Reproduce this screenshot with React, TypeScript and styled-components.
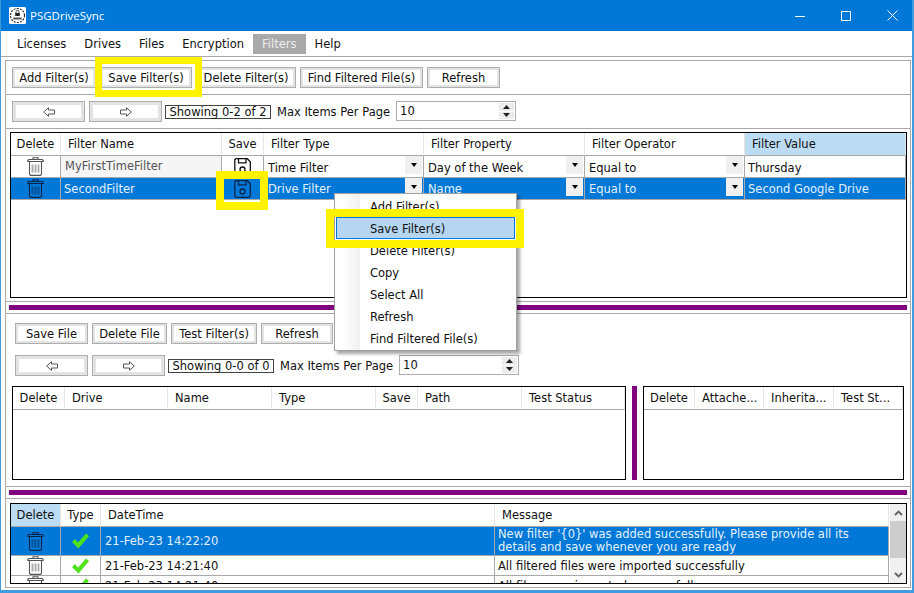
import type { ReactNode } from "react";
import styled, { createGlobalStyle } from "styled-components";

const Global = createGlobalStyle`
  html, body { margin: 0; padding: 0; background: #fff; overflow: hidden; }
  * { box-sizing: border-box; }
`;

const Window = styled.div`
  position: relative;
  width: 914px;
  height: 593px;
  display: flex;
  flex-direction: column;
  background: #fff;
  border-style: solid;
  border-width: 0 2px 3px 1px;
  border-color: #3f9ae0;
  font-family: "DejaVu Sans", Verdana, sans-serif;
  font-size: 11.5px;
  color: #111;
  overflow: hidden;
`;

const TitleBar = styled.div`
  height: 31px;
  flex: none;
  margin: 0 -3px 0 -1px;
  background: #0078d7;
  color: #fff;
  display: flex;
  align-items: center;
  padding-left: 9px;
  font-family: "Open Sans", "Noto Sans", sans-serif;
  font-size: 11.5px;
`;

const AppName = styled.span`
  margin-left: 4px;
  flex: 1;
`;

const WinButton = styled.div`
  width: 46px;
  height: 31px;
  display: grid;
  place-items: center;
`;

const MenuBar = styled.div`
  height: 26px;
  flex: none;
  display: flex;
  align-items: center;
  padding: 1px 0 0 7px;
  border-bottom: 1px solid #a9a9a9;
`;

const MenuItem = styled.div<{ $active?: boolean }>`
  height: 20px;
  line-height: 20px;
  padding: 0 9px;
  background: ${({ $active }) => ($active ? "#a9a9a9" : "transparent")};
  color: ${({ $active }) => ($active ? "#ececec" : "#111")};
`;

const Panel = styled.div`
  flex: 1;
  margin: 3px 1px 2px 4px;
  border: 1px solid #a9a9a9;
  display: flex;
  flex-direction: column;
  min-height: 0;
`;

const Toolbar = styled.div`
  height: 34px;
  flex: none;
  display: flex;
  align-items: center;
  gap: 4px;
  padding-left: 6px;
  border-bottom: 1px solid #a9a9a9;
`;

const Pager = styled(Toolbar)``;

const BareRow = styled.div`
  display: flex;
  align-items: center;
  gap: 4px;
`;

const Button = styled.div<{ $w: number; $thick?: boolean }>`
  width: ${({ $w }) => $w}px;
  height: 21px;
  flex: none;
  border: 1px solid #adadad;
  box-shadow: inset 0 0 0 ${({ $thick }) => ($thick ? 3 : 2)}px #e3e3e3;
  background: #fff;
  display: grid;
  place-items: center;
  white-space: nowrap;
`;

const Showing = styled.div`
  width: 106px;
  height: 14px;
  margin: 1px 0 0 -1px;
  border: 1px solid #444;
  line-height: 12px;
  text-align: center;
  white-space: nowrap;
`;

const MaxLabel = styled.div`
  margin: 1px 2px 0;
  white-space: nowrap;
`;

const Spin = styled.div`
  width: 120px;
  height: 20px;
  margin-top: -1px;
  border: 1px solid #adadad;
  display: flex;
  justify-content: space-between;
  padding: 1px 1px 1px 3px;
  line-height: 16px;
`;

const SpinArrows = styled.div`
  width: 15px;
  display: flex;
  flex-direction: column;
  gap: 1px;
`;

const SpinArrow = styled.div`
  flex: 1;
  background: #ececec;
  display: grid;
  place-items: center;
  font-size: 0;
`;

const GridArea = styled.div`
  height: 173px;
  flex: none;
  padding: 3px 3px 3px 4px;
  border-bottom: 1px solid #a9a9a9;
`;

const Splitter = styled.div`
  height: 12px;
  flex: none;
  padding: 3px 3px 2px 3px;
  border-bottom: 1px solid #a9a9a9;
`;

const SplitBar = styled.div`
  height: 5px;
  background: #800080;
`;

const Middle = styled.div`
  height: 173px;
  flex: none;
  display: flex;
  flex-direction: column;
  border-bottom: 1px solid #a9a9a9;
`;

const MiddleButtons = styled(BareRow)`
  padding: 9px 0 0 9px;
`;

const MiddlePager = styled(BareRow)`
  padding: 11px 0 0 9px;
`;

const MiddleGrids = styled.div`
  display: flex;
  height: 94px;
  margin-top: 10px;
  padding-left: 6px;
`;

const VSplit = styled.div`
  width: 5px;
  margin: 0 6px;
  background: #800080;
`;

const LogArea = styled.div`
  flex: 1;
  padding: 4px 3px 3px 4px;
  min-height: 0;
`;

const Grid = styled.div<{ $w?: number }>`
  width: ${({ $w }) => ($w ? `${$w}px` : "auto")};
  height: 100%;
  border: 1px solid #000;
  background: #fff;
  overflow: hidden;
  display: flex;
`;

const GridBody = styled.div`
  flex: 1;
  min-width: 0;
  overflow: hidden;
`;

const Row = styled.div<{ $cols: string; $h: number; $selected?: boolean }>`
  display: grid;
  grid-template-columns: ${({ $cols }) => $cols};
  height: ${({ $h }) => $h}px;
  background: ${({ $selected }) => ($selected ? "#0078d7" : "#fff")};
  color: ${({ $selected }) => ($selected ? "#e4f1fb" : "#111")};
`;

const HeadCell = styled.div<{ $hot?: boolean; $center?: boolean }>`
  display: flex;
  align-items: center;
  justify-content: ${({ $center }) => ($center ? "center" : "flex-start")};
  padding-left: ${({ $center }) => ($center ? 0 : 7)}px;
  padding-bottom: 1px;
  white-space: nowrap;
  overflow: hidden;
  background: ${({ $hot }) => ($hot ? "#bbdcf3" : "#fff")};
  border-right: 1px solid #e6e6e6;
  border-bottom: 1px solid #a9a9a9;
`;

const Cell = styled.div<{ $center?: boolean; $muted?: boolean; $top?: number }>`
  position: relative;
  display: flex;
  align-items: center;
  justify-content: ${({ $center }) => ($center ? "center" : "flex-start")};
  padding-left: ${({ $center }) => ($center ? 0 : 4)}px;
  padding-top: ${({ $top }) => $top ?? 0}px;
  white-space: nowrap;
  overflow: hidden;
  line-height: 13px;
  background: ${({ $muted }) => ($muted ? "#f5f5f5" : "transparent")};
  color: ${({ $muted }) => ($muted ? "#555" : "inherit")};
  border-right: 1px solid #a9a9a9;
  border-bottom: 1px solid #a9a9a9;
`;

const NameText = styled.span<{ $selected?: boolean }>`
  margin-left: ${({ $selected }) => ($selected ? -1 : 0)}px;
`;

const TightText = styled.span`
  margin-left: -1px;
`;

const ComboButton = styled.div`
  position: absolute;
  top: 0;
  right: 1px;
  width: 17px;
  height: 18px;
  background: #f0f0f0;
  display: grid;
  place-items: center;
`;

const ComboArrow = styled.div`
  width: 0;
  height: 0;
  border: 3px solid transparent;
  border-top: 4px solid #000;
  border-bottom: 0;
`;

const Scrollbar = styled.div`
  width: 16px;
  flex: none;
  margin-left: 1px;
  background: #f0f0f0;
  display: flex;
  flex-direction: column;
  align-items: center;
  justify-content: space-between;
  padding: 6px 0 5px;
  position: relative;
`;

const ScrollThumb = styled.div`
  position: absolute;
  top: 17px;
  left: 0;
  right: 0;
  height: 37px;
  background: #cdcdcd;
`;

const ContextMenu = styled.div`
  position: absolute;
  left: 333px;
  top: 193px;
  width: 183px;
  height: 158px;
  padding: 1px;
  border: 1px solid #a0a0a0;
  box-shadow: 3px 3px 3px rgba(0, 0, 0, 0.35);
  background: linear-gradient(to right, #fff 8px, #f0f0f0 25px, #fff 25px);
`;

const ContextItem = styled.div<{ $selected?: boolean }>`
  height: 22px;
  line-height: 22px;
  padding-left: 33px;
  border: 1px solid ${({ $selected }) => ($selected ? "#0078d7" : "transparent")};
  background: ${({ $selected }) => ($selected ? "#b5d5f1" : "transparent")};
`;

const Mark = styled.div`
  position: absolute;
  border: 7px solid #fff200;
  pointer-events: none;
`;

const ButtonMark = styled(Mark)`
  left: 94px;
  top: 57px;
  width: 107px;
  height: 40px;
`;

const IconMark = styled(Mark)`
  left: 215px;
  top: 171px;
  width: 52px;
  height: 39px;
  border-width: 8px;
`;

const MenuMark = styled(Mark)`
  left: 325px;
  top: 209px;
  width: 198px;
  height: 39px;
  border-width: 8px;
`;

type Col = { title: string; width: number; center?: boolean; hot?: boolean };

const cols = (list: Col[]) => list.map((c) => `${c.width}px`).join(" ");

const filterCols: Col[] = [
  { title: "Delete", width: 50, center: true },
  { title: "Filter Name", width: 161 },
  { title: "Save", width: 42, center: true },
  { title: "Filter Type", width: 160 },
  { title: "Filter Property", width: 161 },
  { title: "Filter Operator", width: 160 },
  { title: "Filter Value", width: 161, hot: true },
];

const fileCols: Col[] = [
  { title: "Delete", width: 52, center: true },
  { title: "Drive", width: 103 },
  { title: "Name", width: 104 },
  { title: "Type", width: 104 },
  { title: "Save", width: 42, center: true },
  { title: "Path", width: 104 },
  { title: "Test Status", width: 103 },
];

const attachCols: Col[] = [
  { title: "Delete", width: 51, center: true },
  { title: "Attache...", width: 69 },
  { title: "Inherita...", width: 70 },
  { title: "Test St...", width: 69 },
];

const logCols: Col[] = [
  { title: "Delete", width: 50, center: true, hot: true },
  { title: "Type", width: 40, center: true },
  { title: "DateTime", width: 394 },
  { title: "Message", width: 394 },
];

const Trash = ({ color }: { color: string }) => (
  <svg width="17" height="19" viewBox="0 0 17 19" fill="none" stroke={color} strokeWidth="1.1">
    <path d="M6 2.500V.8h5v1.700" />
    <path d="M.8 3.500l1-1h13.400l1 1v1H.8z" />
    <path d="M2.500 4.500v12.700l1 1.200h10l1-1.200V4.500" />
    <path d="M5.500 7.500v8M8.500 7.500v8M11.500 7.500v8" strokeWidth="1.800" opacity="0.5" />
  </svg>
);

const Floppy = ({ color }: { color: string }) => (
  <svg width="17" height="18" viewBox="0 0 17 18" fill="none" stroke={color} strokeWidth="1.300">
    <path d="M1.800.7h11.500l3 3v12.200l-1 1.400H1.800l-1-1.400V1.700z" />
    <path d="M4.500.7v4.200h7.500V.7" />
    <circle cx="8.500" cy="11.500" r="2.500" />
  </svg>
);

const Check = () => (
  <svg width="17" height="16" viewBox="0 0 17 16">
    <path d="M0 9l3-3 3 3.500L14 .5l3 2.500L6.500 15.500z" fill="#4fe31c" />
  </svg>
);

const Arrow = ({ right }: { right?: boolean }) => (
  <svg width="12" height="10" viewBox="0 0 12 10" fill="#fff" stroke="#555">
    <path d={right ? "M.5 3h6V.7L11.300 5 6.500 9.300V7h-6z" : "M11.500 3h-6V.7L.700 5l4.800 4.300V7h6z"} />
  </svg>
);

const Tri = ({ up, color = "#444" }: { up?: boolean; color?: string }) => (
  <svg width="7" height="4" viewBox="0 0 7 4">
    <path d={up ? "M0 4l3.500-4L7 4z" : "M0 0l3.500 4L7 0z"} fill={color} />
  </svg>
);

const Chevron = ({ up }: { up?: boolean }) => (
  <svg width="9" height="6" viewBox="0 0 9 6" fill="none" stroke="#606060" strokeWidth="1.800">
    <path d={up ? "M1 5l3.500-3.500L8 5" : "M1 1l3.500 3.500L8 1"} />
  </svg>
);

const Logo = () => (
  <svg width="17" height="17" viewBox="0 0 17 17">
    <rect width="17" height="17" rx="1.500" fill="#fff" />
    <circle cx="8.500" cy="8.500" r="7" fill="none" stroke="#222" strokeWidth="1.100" strokeDasharray="2 1.200" />
    <path d="M7 6V4.800a1.500 1.500 0 013 0V6" fill="none" stroke="#222" strokeWidth="0.800" />
    <rect x="6.200" y="6" width="4.600" height="3" fill="#222" />
    <path d="M4.300 10.500h8.400v2H4.300z" fill="#555" />
  </svg>
);

const Head = ({ columns }: { columns: Col[] }) => (
  <Row $cols={cols(columns)} $h={23}>
    {columns.map((c) => (
      <HeadCell key={c.title} $hot={c.hot} $center={c.center}>
        {c.title}
      </HeadCell>
    ))}
  </Row>
);

const Combo = ({ text, top }: { text: string; top: number }) => (
  <Cell $top={top}>
    {text}
    <ComboButton>
      <ComboArrow />
    </ComboButton>
  </Cell>
);

const FilterRow = ({
  name,
  type,
  prop,
  value,
  selected,
}: {
  name: string;
  type: string;
  prop: string;
  value: string;
  selected?: boolean;
}) => {
  const top = selected ? 2 : 4;
  return (
    <Row $cols={cols(filterCols)} $h={22} $selected={selected}>
      <Cell $center>
        <Trash color={selected ? "#06244a" : "#555"} />
      </Cell>
      <Cell $muted={!selected} $top={selected ? 2 : 0}>
        <NameText $selected={selected}>{name}</NameText>
      </Cell>
      <Cell $center>
        <Floppy color={selected ? "#06244a" : "#111"} />
      </Cell>
      <Combo text={type} top={top} />
      <Combo text={prop} top={top} />
      <Combo text="Equal to" top={top} />
      <Cell $top={top}>
        <TightText>{value}</TightText>
      </Cell>
    </Row>
  );
};

const LogRow = ({
  time,
  message,
  h,
  top,
  selected,
}: {
  time: string;
  message: ReactNode;
  h: number;
  top?: number;
  selected?: boolean;
}) => (
  <Row $cols={cols(logCols)} $h={h} $selected={selected}>
    <Cell $center>
      <Trash color={selected ? "#06244a" : "#555"} />
    </Cell>
    <Cell $center>
      <Check />
    </Cell>
    <Cell $top={top}>{time}</Cell>
    <Cell $top={top}>
      <TightText>{message}</TightText>
    </Cell>
  </Row>
);

const PagerContent = ({ showing }: { showing: string }) => (
  <>
    <Button $w={73} $thick>
      <Arrow />
    </Button>
    <Button $w={73} $thick>
      <Arrow right />
    </Button>
    <Showing>{showing}</Showing>
    <MaxLabel>Max Items Per Page</MaxLabel>
    <Spin>
      10
      <SpinArrows>
        <SpinArrow>
          <Tri up color="#222" />
        </SpinArrow>
        <SpinArrow>
          <Tri color="#222" />
        </SpinArrow>
      </SpinArrows>
    </Spin>
  </>
);

export default function App() {
  return (
    <Window>
      <Global />
      <TitleBar>
        <Logo />
        <AppName>PSGDriveSync</AppName>
        <WinButton>
          <svg width="10" height="10" viewBox="0 0 10 10" stroke="#fff">
            <path d="M0 5.500h10" />
          </svg>
        </WinButton>
        <WinButton>
          <svg width="10" height="10" viewBox="0 0 10 10" stroke="#fff" fill="none">
            <path d="M.5.500h9v9h-9z" />
          </svg>
        </WinButton>
        <WinButton>
          <svg width="11" height="11" viewBox="0 0 11 11" stroke="#fff">
            <path d="M.5.500l10 10M10.500.500l-10 10" />
          </svg>
        </WinButton>
      </TitleBar>
      <MenuBar>
        <MenuItem>Licenses</MenuItem>
        <MenuItem>Drives</MenuItem>
        <MenuItem>Files</MenuItem>
        <MenuItem>Encryption</MenuItem>
        <MenuItem $active>Filters</MenuItem>
        <MenuItem>Help</MenuItem>
      </MenuBar>
      <Panel>
        <Toolbar>
          <Button $w={84}>Add Filter(s)</Button>
          <Button $w={92}>Save Filter(s)</Button>
          <Button $w={100}>Delete Filter(s)</Button>
          <Button $w={123}>Find Filtered File(s)</Button>
          <Button $w={73}>Refresh</Button>
        </Toolbar>
        <Pager>
          <PagerContent showing="Showing 0-2 of 2" />
        </Pager>
        <GridArea>
          <Grid>
            <GridBody>
              <Head columns={filterCols} />
              <FilterRow name="MyFirstTimeFilter" type="Time Filter" prop="Day of the Week" value="Thursday" />
              <FilterRow name="SecondFilter" type="Drive Filter" prop="Name" value="Second Google Drive" selected />
            </GridBody>
          </Grid>
        </GridArea>
        <Splitter>
          <SplitBar />
        </Splitter>
        <Middle>
          <MiddleButtons>
            <Button $w={73}>Save File</Button>
            <Button $w={75}>Delete File</Button>
            <Button $w={86}>Test Filter(s)</Button>
            <Button $w={72}>Refresh</Button>
          </MiddleButtons>
          <MiddlePager>
            <PagerContent showing="Showing 0-0 of 0" />
          </MiddlePager>
          <MiddleGrids>
            <Grid $w={614}>
              <GridBody>
                <Head columns={fileCols} />
              </GridBody>
            </Grid>
            <VSplit />
            <Grid $w={261}>
              <GridBody>
                <Head columns={attachCols} />
              </GridBody>
            </Grid>
          </MiddleGrids>
        </Middle>
        <Splitter>
          <SplitBar />
        </Splitter>
        <LogArea>
          <Grid>
            <GridBody>
              <Head columns={logCols} />
              <LogRow
                selected
                h={29}
                time="21-Feb-23 14:22:20"
                message={
                  <>
                    New filter '{"{0}"}' was added successfully. Please provide all its
                    <br />
                    details and save whenever you are ready
                  </>
                }
              />
              <LogRow h={20} top={2} time="21-Feb-23 14:21:40" message="All filtered files were imported successfully" />
              <LogRow h={20} top={2} time="21-Feb-23 14:21:40" message="All files were imported successfully" />
            </GridBody>
            <Scrollbar>
              <Chevron up />
              <ScrollThumb />
              <Chevron />
            </Scrollbar>
          </Grid>
        </LogArea>
      </Panel>
      <ContextMenu>
        <ContextItem>Add Filter(s)</ContextItem>
        <ContextItem $selected>Save Filter(s)</ContextItem>
        <ContextItem>Delete Filter(s)</ContextItem>
        <ContextItem>Copy</ContextItem>
        <ContextItem>Select All</ContextItem>
        <ContextItem>Refresh</ContextItem>
        <ContextItem>Find Filtered File(s)</ContextItem>
      </ContextMenu>
      <ButtonMark />
      <IconMark />
      <MenuMark />
    </Window>
  );
}
